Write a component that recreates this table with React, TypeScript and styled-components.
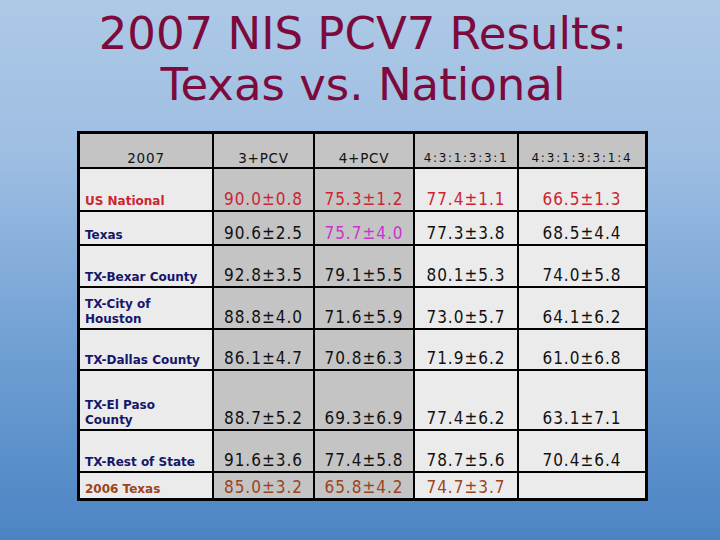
import React from "react";
import styled, { createGlobalStyle } from "styled-components";

const Global = createGlobalStyle`
  html, body { margin: 0; padding: 0; }
  body { width: 720px; height: 540px; overflow: hidden; }
`;

const Slide = styled.div`
  width: 720px;
  height: 540px;
  box-sizing: border-box;
  background: linear-gradient(180deg, #adc9e6 0%, #9dbde2 30%, #6f9fd3 65%, #4c84c3 100%);
  padding-top: 8px;
  display: flex;
  flex-direction: column;
`;

const Title = styled.h1`
  margin: 0;
  padding-left: 6px;
  font-family: "DejaVu Sans", sans-serif;
  font-weight: normal;
  font-size: 45px;
  line-height: 51px;
  color: #7d0a3c;
  text-align: center;
`;

const Grid = styled.div`
  margin: 21px 0 0 77px;
  width: 571px;
  box-sizing: border-box;
  display: grid;
  grid-template-columns: 132px 99px 98px 102px 126px;
  grid-template-rows: 33px 41px 32px 40px 40px 39px 58px 40px 25px;
  gap: 2px;
  padding: 3px;
  background: #000;
`;

type Tone = "plain" | "red" | "navy" | "magenta" | "brown";

const tones: Record<Tone, string> = {
  plain: "#111111",
  red: "#cc2431",
  navy: "#16166a",
  magenta: "#cc33cc",
  brown: "#9a4420",
};

const Cell = styled.div<{ $shade: boolean; $tone: Tone }>`
  background: ${(p) => (p.$shade ? "#c4c4c4" : "#ebebeb")};
  color: ${(p) => tones[p.$tone]};
  display: flex;
  align-items: flex-end;
  justify-content: center;
  box-sizing: border-box;
  padding-bottom: 1px;
  font-family: "DejaVu Sans Condensed", "DejaVu Sans", sans-serif;
  font-stretch: condensed;
  font-size: 17px;
  letter-spacing: 1px;
  line-height: 20px;
  white-space: nowrap;
`;

const HeadCell = styled(Cell)<{ $spacing: number; $size: number }>`
  font-family: "DejaVu Sans", sans-serif;
  font-stretch: normal;
  font-size: ${(p) => p.$size}px;
  letter-spacing: ${(p) => p.$spacing}px;
  line-height: 16px;
  padding-bottom: 1px;
`;

const Label = styled(Cell)`
  justify-content: flex-start;
  padding-left: 5px;
  font-family: "DejaVu Sans", sans-serif;
  font-stretch: normal;
  font-weight: bold;
  font-size: 12px;
  letter-spacing: 0;
  line-height: 15px;
  white-space: normal;
  padding-bottom: 1px;
`;

const rows: { label: React.ReactNode; tone: Tone; values: (string | null)[]; tones?: Tone[] }[] = [
  { label: "US National", tone: "red", values: ["90.0±0.8", "75.3±1.2", "77.4±1.1", "66.5±1.3"] },
  {
    label: "Texas",
    tone: "navy",
    values: ["90.6±2.5", "75.7±4.0", "77.3±3.8", "68.5±4.4"],
    tones: ["plain", "magenta", "plain", "plain"],
  },
  { label: "TX-Bexar County", tone: "navy", values: ["92.8±3.5", "79.1±5.5", "80.1±5.3", "74.0±5.8"] },
  {
    label: (
      <>
        TX-City of
        <br />
        Houston
      </>
    ),
    tone: "navy",
    values: ["88.8±4.0", "71.6±5.9", "73.0±5.7", "64.1±6.2"],
  },
  { label: "TX-Dallas County", tone: "navy", values: ["86.1±4.7", "70.8±6.3", "71.9±6.2", "61.0±6.8"] },
  {
    label: (
      <>
        TX-El Paso
        <br />
        County
      </>
    ),
    tone: "navy",
    values: ["88.7±5.2", "69.3±6.9", "77.4±6.2", "63.1±7.1"],
  },
  { label: "TX-Rest of State", tone: "navy", values: ["91.6±3.6", "77.4±5.8", "78.7±5.6", "70.4±6.4"] },
  { label: "2006 Texas", tone: "brown", values: ["85.0±3.2", "65.8±4.2", "74.7±3.7", null] },
];

const headers: { text: string; size: number; spacing: number }[] = [
  { text: "2007", size: 13.5, spacing: 0.8 },
  { text: "3+PCV", size: 13.5, spacing: 0.8 },
  { text: "4+PCV", size: 13.5, spacing: 0.8 },
  { text: "4:3:1:3:3:1", size: 12, spacing: 1.7 },
  { text: "4:3:1:3:3:1:4", size: 12, spacing: 1.8 },
];

export default function App() {
  return (
    <Slide>
      <Global />
      <Title>
        2007 NIS PCV7 Results:
        <br />
        Texas vs. National
      </Title>
      <Grid>
        {headers.map((h) => (
          <HeadCell key={h.text} $shade $tone="plain" $size={h.size} $spacing={h.spacing}>
            {h.text}
          </HeadCell>
        ))}
        {rows.map((r, i) => (
          <React.Fragment key={i}>
            <Label $shade={false} $tone={r.tone}>
              {r.label}
            </Label>
            {r.values.map((v, j) => (
              <Cell
                key={j}
                $shade={j < 2}
                $tone={r.tones ? r.tones[j] : r.tone === "navy" ? "plain" : r.tone}
              >
                {v}
              </Cell>
            ))}
          </React.Fragment>
        ))}
      </Grid>
    </Slide>
  );
}
